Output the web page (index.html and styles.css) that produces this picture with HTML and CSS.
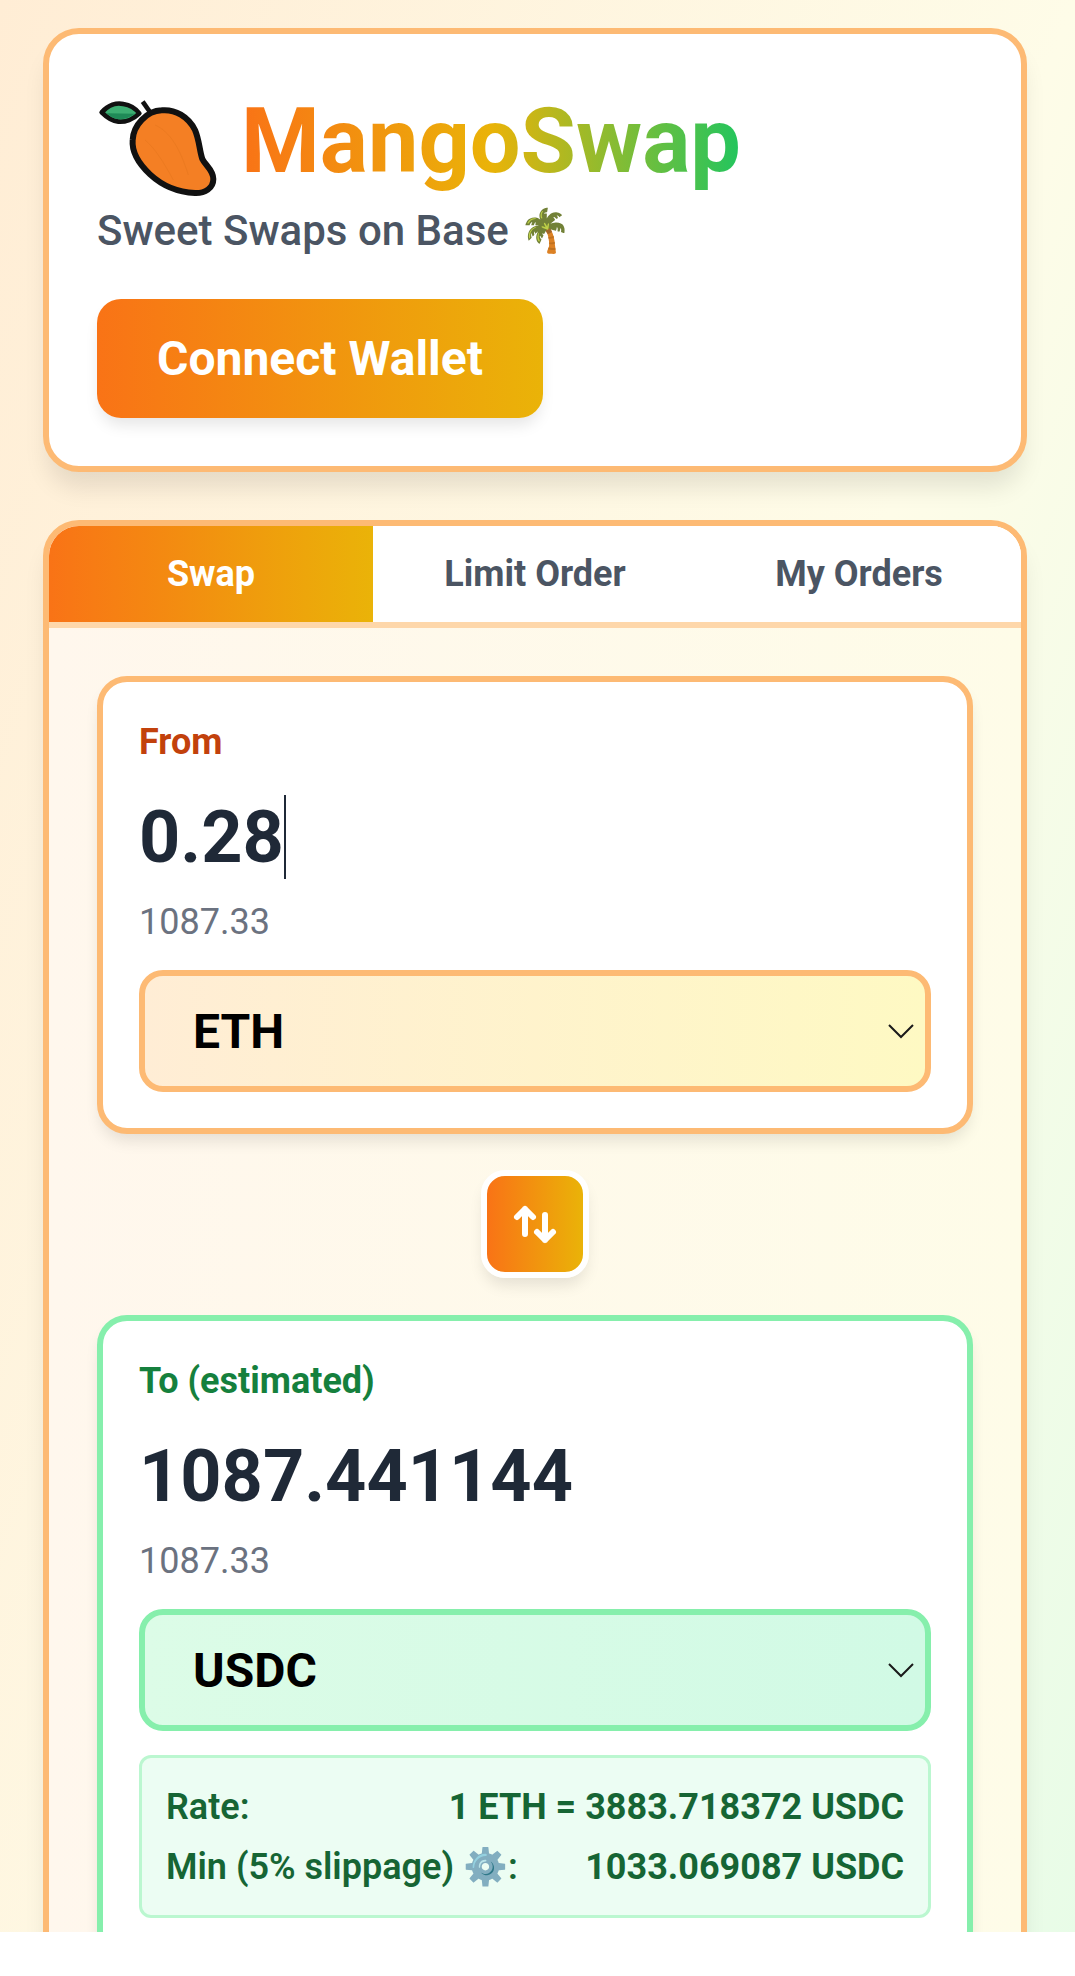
FILE: index.html
```html
<!DOCTYPE html>
<html lang="en">
<head>
    <meta charset="UTF-8">
    <meta name="viewport" content="width=device-width, initial-scale=1.0">
    <title>MangoSwap</title>
    <link rel="stylesheet" href="styles.css">
</head>
<body>

<div class="page">
    <div class="header-card">
        <div class="brand">
            <svg class="mango" width="122" height="100" viewBox="51 39 366 300">
                <path d="M188 50 L212 84" fill="none" stroke="#111" stroke-width="14"/>
                <path d="M65 82 C85 60 110 52 130 57 C150 60 168 72 178 85 C160 103 135 112 115 110 C95 108 78 95 65 82 Z" fill="#3dae72" stroke="#111" stroke-width="14" stroke-linejoin="round"/>
                <path d="M80 85 L165 86 C150 97 130 104 115 103 C102 102 90 94 80 85 Z" fill="#1f8a57"/>
                <path d="M245 76 C285 72 325 95 345 135 C358 165 358 195 367 222 C375 240 400 255 400 282 C400 310 375 325 345 324 C300 322 250 305 210 268 C175 235 155 200 158 165 C160 120 200 78 245 76 Z" fill="#f47f24" stroke="#111" stroke-width="18" stroke-linejoin="round"/>
                <path d="M225 120 C270 140 300 190 325 270 M195 165 C225 190 250 230 280 285" fill="none" stroke="#ec7a20" stroke-width="3"/>
            </svg>
            <h1 class="brand-name">MangoSwap</h1>
        </div>
        <p class="tagline">Sweet Swaps on Base 🌴</p>
        <button class="connect-btn">Connect Wallet</button>
    </div>

    <div class="swap-card">
        <div class="tabs">
            <button class="tab active">Swap</button>
            <button class="tab">Limit Order</button>
            <button class="tab">My Orders</button>
        </div>

        <div class="swap-body">
            <div class="token-box from-box">
                <div class="box-label from-label">From</div>
                <div class="amount">0.28<span class="caret"></span></div>
                <div class="balance">1087.33</div>
                <div class="token-select from-select">
                    <span>ETH</span>
                    <svg class="chevron" width="26" height="16" viewBox="0 0 26 16"><path d="M1 2 L13 14 L25 2" fill="none" stroke="#1a1a1a" stroke-width="2"/></svg>
                </div>
            </div>

            <div class="flip-row">
                <button class="flip-btn">
                    <svg width="46" height="42" viewBox="0 0 46 42"><path d="M13 31 V6 M5 14 L13 6 L21 14 M33 12 V37 M25 29 L33 37 L41 29" fill="none" stroke="#fff" stroke-width="6" stroke-linecap="round" stroke-linejoin="round"/></svg>
                </button>
            </div>

            <div class="token-box to-box">
                <div class="box-label to-label">To (estimated)</div>
                <div class="amount">1087.441144</div>
                <div class="balance">1087.33</div>
                <div class="token-select to-select">
                    <span>USDC</span>
                    <svg class="chevron" width="26" height="16" viewBox="0 0 26 16"><path d="M1 2 L13 14 L25 2" fill="none" stroke="#1a1a1a" stroke-width="2"/></svg>
                </div>
                <div class="quote">
                    <div class="quote-row"><span class="quote-key">Rate:</span><span>1 ETH = 3883.718372 USDC</span></div>
                    <div class="quote-row"><span class="quote-key">Min (5% slippage) ⚙️:</span><span>1033.069087 USDC</span></div>
                </div>
            </div>
        </div>
    </div>
</div>

</body>
</html>
```

FILE: styles.css
```css
* {
    box-sizing: border-box;
}

html {
    background: #fff;
}

body {
    margin: 0;
    height: 1932px;
    overflow: hidden;
    font-family: Roboto, "Noto Sans", sans-serif;
    background: linear-gradient(to bottom right, #ffedd5, #fefce8 50%, #dcfce7) no-repeat;
    background-size: 100% 3000px;
}

.page {
    padding: 28px 48px 0 43px;
}

.header-card {
    background: #fff;
    border: 6px solid #fdba74;
    border-radius: 36px;
    padding: 48px;
    box-shadow: 0 20px 25px -5px rgba(0, 0, 0, 0.1);
    margin-bottom: 48px;
}

.brand {
    display: flex;
    align-items: flex-start;
    height: 124px;
}

.mango {
    margin-top: 16px;
    margin-right: 22px;
    flex-shrink: 0;
}

.brand-name {
    margin: 0;
    font-size: 90px;
    line-height: 120px;
    font-weight: 700;
    background: linear-gradient(90deg, #f97316, #eab308 50%, #22c55e);
    -webkit-background-clip: text;
    background-clip: text;
    color: transparent;
}

.tagline {
    margin: 0;
    font-size: 42px;
    line-height: 50px;
    font-weight: 500;
    color: #4b5563;
}

.connect-btn {
    display: block;
    margin-top: 43px;
    width: 446px;
    height: 119px;
    border: none;
    border-radius: 24px;
    color: #fff;
    font-family: inherit;
    font-size: 48px;
    font-weight: 700;
    background: linear-gradient(90deg, #f97316, #eab308);
    box-shadow: 0 10px 15px -3px rgba(0, 0, 0, 0.1);
}

.swap-card {
    border: 6px solid #fdba74;
    border-radius: 36px;
    background: linear-gradient(90deg, #fff7ed, #fefce8);
    box-shadow: 0 20px 25px -5px rgba(0, 0, 0, 0.1);
    overflow: hidden;
}

.tabs {
    display: flex;
    background: #fff;
    border-bottom: 6px solid #fed7aa;
}

.tab {
    flex: 1;
    height: 96px;
    border: none;
    background: #fff;
    color: #4b5563;
    font-family: inherit;
    font-size: 36px;
    font-weight: 700;
}

.tab.active {
    color: #fff;
    background: linear-gradient(90deg, #f97316, #eab308);
}

.swap-body {
    padding: 48px;
}

.token-box {
    background: #fff;
    border: 6px solid #fdba74;
    border-radius: 30px;
    padding: 36px;
    box-shadow: 0 10px 15px -3px rgba(0, 0, 0, 0.1);
}

.to-box {
    border-color: #86efac;
}

.box-label {
    margin-top: 2px;
    font-size: 36px;
    line-height: 44px;
    font-weight: 700;
}

.from-label {
    color: #c2410c;
}

.to-label {
    color: #15803d;
}

.amount {
    display: flex;
    align-items: center;
    margin-top: 25px;
    height: 96px;
    font-size: 72px;
    font-weight: 700;
    color: #1f2937;
}

.caret {
    width: 2px;
    height: 84px;
    background: #1f2937;
}

.balance {
    margin-top: 15px;
    font-size: 36px;
    line-height: 44px;
    color: #6b7280;
}

.token-select {
    display: flex;
    align-items: center;
    justify-content: space-between;
    margin-top: 26px;
    height: 122px;
    padding: 0 11px 0 48px;
    border: 6px solid #fdba74;
    border-radius: 24px;
    font-size: 48px;
    font-weight: 700;
    color: #000;
}

.from-select {
    background: linear-gradient(90deg, #ffedd5, #fef9c3);
}

.to-select {
    border-color: #86efac;
    background: linear-gradient(90deg, #dcfce7, #d1fae5);
}

.flip-row {
    display: flex;
    justify-content: center;
    margin: 36px 0 37px;
}

.flip-btn {
    display: flex;
    align-items: center;
    justify-content: center;
    width: 108px;
    height: 108px;
    padding: 0;
    border: 6px solid #fff;
    border-radius: 24px;
    background: linear-gradient(90deg, #f97316, #eab308);
    box-shadow: 0 10px 15px -3px rgba(0, 0, 0, 0.1);
}

.quote {
    display: flex;
    flex-direction: column;
    gap: 10px;
    margin-top: 24px;
    padding: 24px 24px 23px;
    border: 3px solid #bbf7d0;
    border-radius: 12px;
    background: #ecfdf3;
}

.quote-row {
    display: flex;
    justify-content: space-between;
    line-height: 50px;
    font-size: 36px;
    font-weight: 700;
    color: #166534;
}

.quote-key {
    font-weight: 600;
}
```
